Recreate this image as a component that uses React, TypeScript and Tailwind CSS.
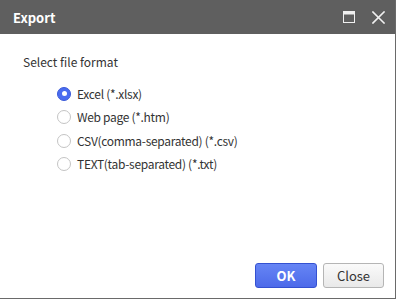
import React from "react";

const options = [
  { label: "Excel (*.xlsx)", checked: true },
  { label: "Web page (*.htm)", checked: false },
  { label: "CSV(comma-separated) (*.csv)", checked: false },
  { label: "TEXT(tab-separated) (*.txt)", checked: false },
];

export default function App() {
  return (
    <div className="w-[397px] h-[300px] bg-white">
      <div
        className="w-[396px] h-[299px] flex flex-col border-r border-b border-[#6a6a6a] bg-white"
        style={{ fontFamily: '"Noto Sans CJK KR", "Liberation Sans", sans-serif' }}
      >
        <div className="h-[34px] bg-[#5f5f5f] flex items-center justify-between pl-[13px] pr-[10px] shrink-0">
          <span className="text-white font-bold text-[13px] leading-none">Export</span>
          <div className="flex items-center gap-[17px]">
            <svg width="12" height="12" viewBox="0 0 12 12">
              <rect x="0.5" y="0.5" width="11" height="11" fill="none" stroke="#f0f0f0" strokeWidth="1" />
              <rect x="0.5" y="0.5" width="11" height="3" fill="#f0f0f0" />
            </svg>
            <svg width="13" height="13" viewBox="0 0 13 13">
              <path d="M1 1 L12 12 M12 1 L1 12" stroke="#f0f0f0" strokeWidth="1.6" strokeLinecap="square" />
            </svg>
          </div>
        </div>
        <div className="flex-1 flex flex-col pl-[23px] pt-[19px]">
          <div className="text-[12px] leading-[18px] text-[#333]">Select file format</div>
          <div className="flex flex-col pl-[34px] mt-[11px]">
            {options.map((o) => (
              <div key={o.label} className="h-[23.5px] flex items-center gap-[6px]">
                {o.checked ? (
                  <span className="w-[14px] h-[14px] rounded-full bg-[#4a6cf0] border border-[#3b5ad8] flex items-center justify-center">
                    <span className="w-[5px] h-[5px] rounded-full bg-white" />
                  </span>
                ) : (
                  <span className="w-[14px] h-[14px] rounded-full bg-white border border-[#c4c4c4]" />
                )}
                <span className="text-[12px] leading-none tracking-[-0.3px] text-[#333]">{o.label}</span>
              </div>
            ))}
          </div>
        </div>
        <div className="flex justify-end gap-[6px] pr-[11px] pb-[10px]">
          <button className="w-[62px] h-[25px] rounded-[3px] border border-[#3451d1] bg-gradient-to-b from-[#6685f5] to-[#4d6ae9] text-white font-bold text-[13px] leading-none">
            OK
          </button>
          <button className="w-[61px] h-[25px] rounded-[3px] border border-[#b5b5b5] bg-gradient-to-b from-[#fafafa] to-[#e9e9e9] text-[#333] text-[13px] leading-none">
            Close
          </button>
        </div>
      </div>
    </div>
  );
}
